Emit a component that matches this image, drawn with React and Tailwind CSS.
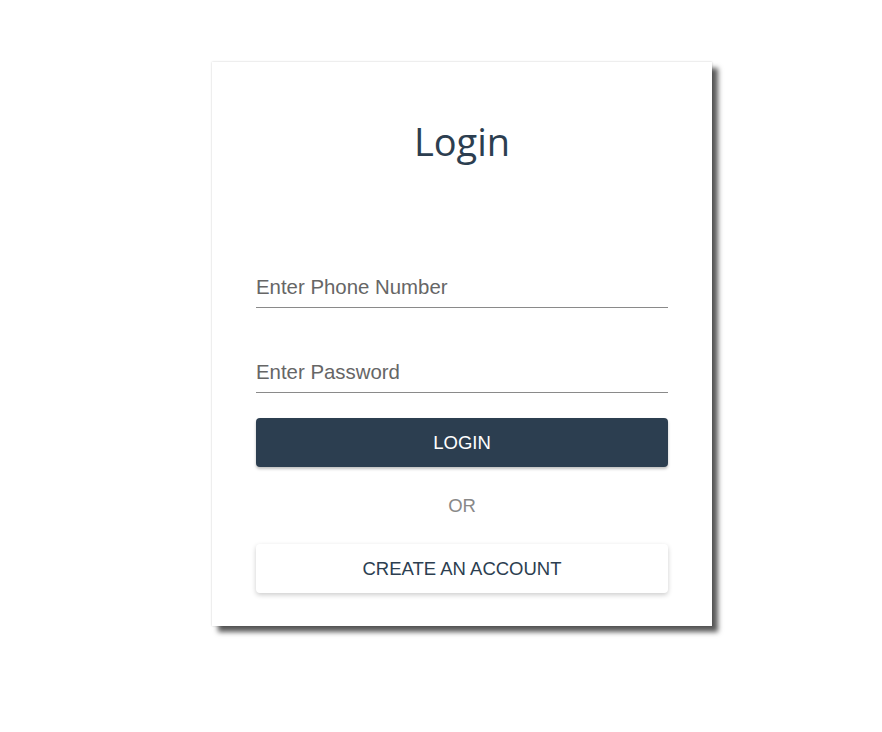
export default function App() {
  return (
    <div className="min-h-screen bg-white pt-[62px]" style={{ fontFamily: '"Liberation Sans", Arial, sans-serif' }}>
      <div className="ml-[212px] flex w-[500px] flex-col bg-white px-[44px] pb-[33px] pt-[55px] shadow-[6px_6px_5px_rgba(0,0,0,0.65),0_0_2px_rgba(0,0,0,0.2)]">
        <h1 className="text-center text-[38px] leading-[48px] text-[#2c3e50]" style={{ fontFamily: '"Open Sans", "Noto Sans", sans-serif' }}>
          Login
        </h1>
        <input
          className="mt-[103px] h-[40px] w-full border-b border-[#8a8a8a] bg-transparent text-[20.4px] text-[#333] outline-none placeholder:text-[#666]"
          type="text"
          placeholder="Enter Phone Number"
        />
        <input
          className="mt-[45px] h-[40px] w-full border-b border-[#8a8a8a] bg-transparent text-[20.4px] text-[#333] outline-none placeholder:text-[#666]"
          type="password"
          placeholder="Enter Password"
        />
        <button
          type="button"
          className="mt-[25px] h-[49px] w-full rounded-[4px] bg-[#2c3e50] text-[18.5px] text-white shadow-[0_2px_3px_rgba(0,0,0,0.25)]"
        >
          LOGIN
        </button>
        <p className="mt-[27px] text-center text-[18.5px] leading-[24px] text-[#888]">OR</p>
        <button
          type="button"
          className="mt-[26px] h-[49px] w-full rounded-[4px] bg-white text-[18.5px] text-[#2c3e50] shadow-[0_2px_5px_rgba(0,0,0,0.2)]"
        >
          CREATE AN ACCOUNT
        </button>
      </div>
    </div>
  )
}
